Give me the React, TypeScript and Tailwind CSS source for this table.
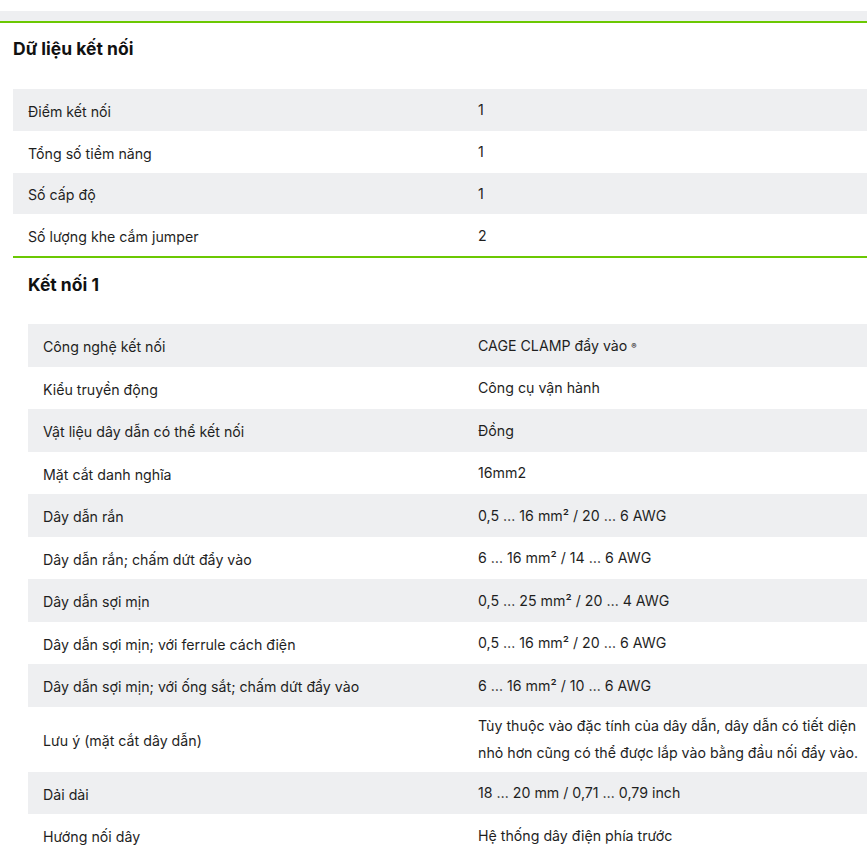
import React from 'react';

type Row = { label: string; value: React.ReactNode };

const connectionData: Row[] = [
  { label: 'Điểm kết nối', value: '1' },
  { label: 'Tổng số tiềm năng', value: '1' },
  { label: 'Số cấp độ', value: '1' },
  { label: 'Số lượng khe cắm jumper', value: '2' },
];

const connection1: Row[] = [
  {
    label: 'Công nghệ kết nối',
    value: (
      <>
        CAGE CLAMP đẩy vào <sup className="text-[8px] font-bold relative -top-[2px]">®</sup>
      </>
    ),
  },
  { label: 'Kiểu truyền động', value: 'Công cụ vận hành' },
  { label: 'Vật liệu dây dẫn có thể kết nối', value: 'Đồng' },
  { label: 'Mặt cắt danh nghĩa', value: '16mm2' },
  { label: 'Dây dẫn rắn', value: '0,5 … 16 mm² / 20 … 6 AWG' },
  { label: 'Dây dẫn rắn; chấm dứt đẩy vào', value: '6 … 16 mm² / 14 … 6 AWG' },
  { label: 'Dây dẫn sợi mịn', value: '0,5 … 25 mm² / 20 … 4 AWG' },
  { label: 'Dây dẫn sợi mịn; với ferrule cách điện', value: '0,5 … 16 mm² / 20 … 6 AWG' },
  { label: 'Dây dẫn sợi mịn; với ống sắt; chấm dứt đẩy vào', value: '6 … 16 mm² / 10 … 6 AWG' },
  {
    label: 'Lưu ý (mặt cắt dây dẫn)',
    value: 'Tùy thuộc vào đặc tính của dây dẫn, dây dẫn có tiết diện nhỏ hơn cũng có thể được lắp vào bằng đầu nối đẩy vào.',
  },
  { label: 'Dải dài', value: '18 … 20 mm / 0,71 … 0,79 inch' },
  { label: 'Hướng nối dây', value: 'Hệ thống dây điện phía trước' },
];

const SpecTable = ({ rows, labelWidth, rowHeight }: { rows: Row[]; labelWidth: string; rowHeight: string }) => (
  <div className="flex flex-col">
    {rows.map((row, i) => (
      <div
        key={row.label}
        className={`flex items-center ${rowHeight} ${i % 2 === 0 ? 'bg-[#eeeff1]' : 'bg-white'}`}
      >
        <div className={`${labelWidth} shrink-0 pl-[15px] pt-[4px] leading-[20px]`}>{row.label}</div>
        <div className="flex-1 pr-[6px] py-[5.5px] leading-[27px]">{row.value}</div>
      </div>
    ))}
  </div>
);

export default function App() {
  return (
    <div className="bg-white min-h-[868px] text-[14.2px] text-[#1f1f1f] font-['Inter','Noto_Sans',sans-serif]">
      <div className="h-[11px]" />
      <div className="h-[10px] bg-[#eeeff1]" />
      <div className="h-[2px] bg-[#6bc803]" />

      <section className="pl-[13px]">
        <h2 className="h-[66px] pt-[15px] text-[17.5px] leading-[22px] font-bold text-[#111]">Dữ liệu kết nối</h2>
        <SpecTable rows={connectionData} labelWidth="w-[465px]" rowHeight="min-h-[41.75px]" />
        <div className="h-[2px] bg-[#6bc803]" />

        <div className="pl-[15px]">
          <h3 className="h-[66px] pt-[16px] text-[17.5px] leading-[22px] font-bold text-[#111]">Kết nối 1</h3>
          <SpecTable rows={connection1} labelWidth="w-[450px]" rowHeight="min-h-[42.5px]" />
        </div>
      </section>
    </div>
  );
}
